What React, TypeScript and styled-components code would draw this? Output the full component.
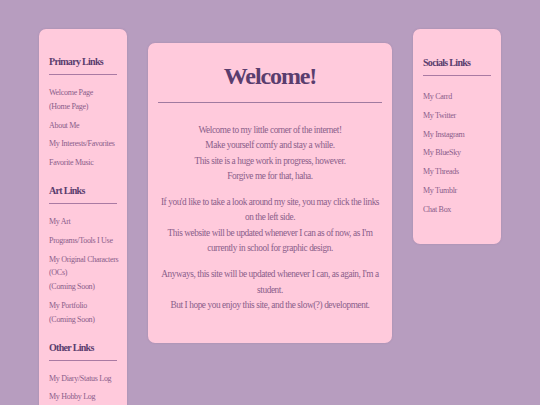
import React from 'react';
import styled, { createGlobalStyle } from 'styled-components';

const GlobalStyle = createGlobalStyle`
  html, body {
    margin: 0;
    padding: 0;
    background: #b79dbf;
    height: 100%;
    overflow: hidden;
  }
  body {
    font-family: "Liberation Serif", "Times New Roman", serif;
  }
`;

const Page = styled.div`
  display: flex;
  justify-content: center;
  align-items: flex-start;
  gap: 21px;
  padding-top: 29px;
  height: 405px;
  box-sizing: border-box;
`;

const Sidebar = styled.aside<{ $top?: number; $bottom?: number }>`
  width: 88px;
  box-sizing: border-box;
  background: #ffcadc;
  border-radius: 7px;
  padding: ${(p) => p.$top ?? 27}px 10px ${(p) => p.$bottom ?? 27}px;
  box-shadow: 0 0 2px rgba(120, 80, 120, 0.25);
`;

const SideTitle = styled.h3<{ $first?: boolean }>`
  margin: ${(p) => (p.$first ? 0 : 15)}px 0 0;
  padding-bottom: 6px;
  border-bottom: 1.5px solid #a97aa3;
  font-size: 10px;
  line-height: 12px;
  font-weight: bold;
  letter-spacing: -0.7px;
  color: #5a3d6e;
`;

const LinkList = styled.ul<{ $offset?: number }>`
  list-style: none;
  margin: ${(p) => p.$offset ?? 11}px 0 0;
  padding: 0;
  display: flex;
  flex-direction: column;
  gap: 5px;
`;

const LinkItem = styled.li`
  font-size: 8px;
  line-height: 13.8px;
  letter-spacing: -0.3px;
  white-space: nowrap;
  color: #8a5d8a;
`;

const Main = styled.main`
  width: 244px;
  box-sizing: border-box;
  margin-top: 14px;
  background: #ffcadc;
  border-radius: 7px;
  padding: 18px 10px 30px;
  text-align: center;
  box-shadow: 0 0 2px rgba(120, 80, 120, 0.25);
`;

const Title = styled.h1`
  margin: 0;
  padding-bottom: 11px;
  border-bottom: 1.5px solid #a07aa0;
  font-size: 24px;
  line-height: 30px;
  letter-spacing: -1.1px;
  color: #5a3d6e;
`;

const Body = styled.div`
  margin-top: 20px;
  display: flex;
  flex-direction: column;
  gap: 11px;
`;

const Para = styled.p`
  margin: 0;
  font-size: 9.3px;
  line-height: 15.3px;
  letter-spacing: -0.42px;
  color: #8a5e8a;
`;

const primary = [
  ['Welcome Page', '(Home Page)'],
  ['About Me'],
  ['My Interests/Favorites'],
  ['Favorite Music'],
];

const art = [
  ['My Art'],
  ['Programs/Tools I Use'],
  ['My Original Characters', '(OCs)', '(Coming Soon)'],
  ['My Portfolio', '(Coming Soon)'],
];

const other = [['My Diary/Status Log'], ['My Hobby Log']];

const socials = [
  ['My Carrd'],
  ['My Twitter'],
  ['My Instagram'],
  ['My BlueSky'],
  ['My Threads'],
  ['My Tumblr'],
  ['Chat Box'],
];

const renderLinks = (items: string[][], offset?: number) => (
  <LinkList $offset={offset}>
    {items.map((lines) => (
      <LinkItem key={lines.join()}>
        {lines.map((l, i) => (
          <React.Fragment key={l}>
            {i > 0 && <br />}
            {l}
          </React.Fragment>
        ))}
      </LinkItem>
    ))}
  </LinkList>
);

const App = () => {
  return (
    <>
      <GlobalStyle />
      <Page>
        <Sidebar $bottom={40}>
          <SideTitle $first>Primary Links</SideTitle>
          {renderLinks(primary)}
          <SideTitle>Art Links</SideTitle>
          {renderLinks(art)}
          <SideTitle>Other Links</SideTitle>
          {renderLinks(other)}
        </Sidebar>

        <Main>
          <Title>Welcome!</Title>
          <Body>
            <Para>
              Welcome to my little corner of the internet!
              <br />
              Make yourself comfy and stay a while.
              <br />
              This site is a huge work in progress, however.
              <br />
              Forgive me for that, haha.
            </Para>
            <Para>
              If you'd like to take a look around my site, you may click the links on the left side.
              <br />
              This website will be updated whenever I can as of now, as I'm currently in school for graphic design.
            </Para>
            <Para>
              Anyways, this site will be updated whenever I can, as again, I'm a student.
              <br />
              But I hope you enjoy this site, and the slow(?) development.
            </Para>
          </Body>
        </Main>

        <Sidebar $top={28} $bottom={27}>
          <SideTitle $first>Socials Links</SideTitle>
          {renderLinks(socials, 14)}
        </Sidebar>
      </Page>
    </>
  );
};

export default App;
